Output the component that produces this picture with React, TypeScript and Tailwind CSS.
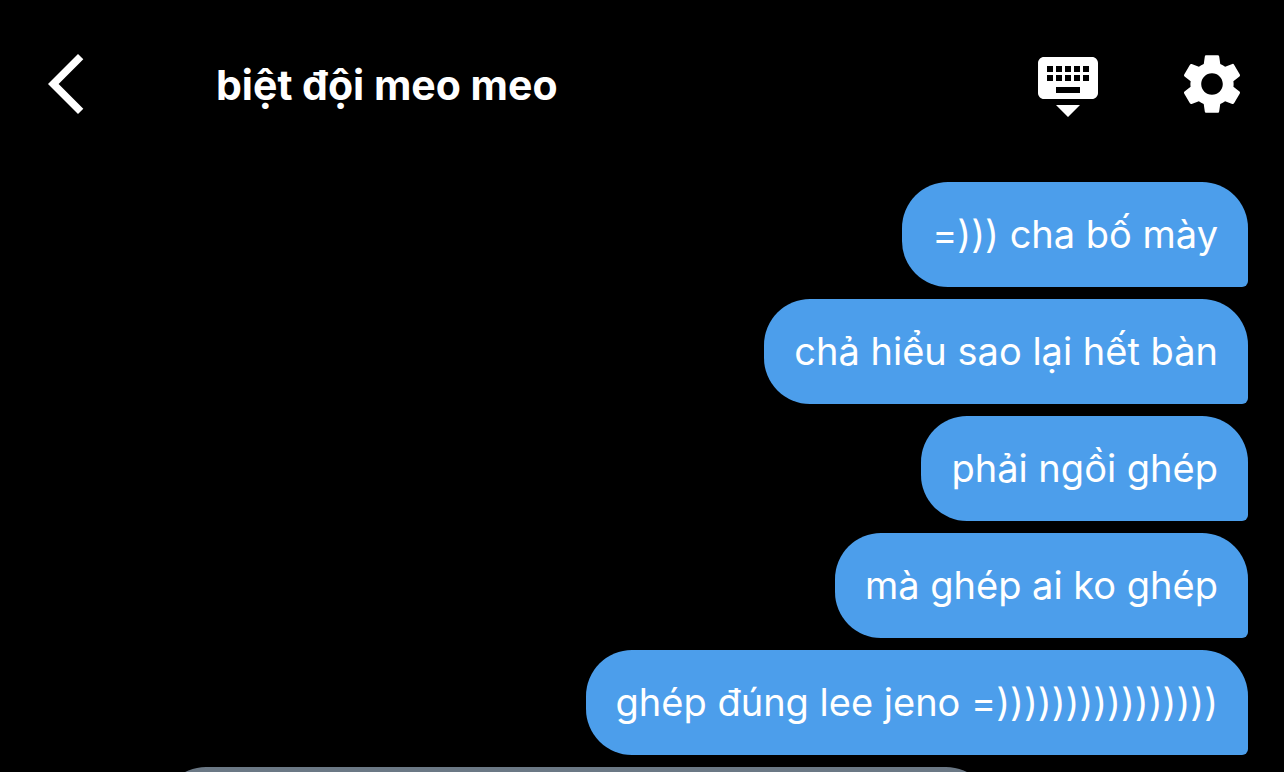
import { MdArrowBackIosNew, MdKeyboardHide, MdSettings } from "react-icons/md";

const sentMessages = [
  "=))) cha bố mày",
  "chả hiểu sao lại hết bàn",
  "phải ngồi ghép",
  "mà ghép ai ko ghép",
  "ghép đúng lee jeno =))))))))))))))))",
];

function SentBubble({ text }: { text: string }) {
  return (
    <li className="flex h-[105px] shrink-0 items-center self-end rounded-[46px] rounded-br-md bg-[#4c9eeb] px-[30px] pb-0.5 text-[38px] leading-[48px] whitespace-nowrap">
      {text}
    </li>
  );
}

export default function App() {
  return (
    <div className="flex h-screen flex-col overflow-hidden bg-black font-[Inter,'Noto_Sans',sans-serif] text-white">
      <header className="flex shrink-0 items-center py-12 pr-9 pl-[30px]">
        <button type="button" aria-label="Back" className="shrink-0">
          <MdArrowBackIosNew className="size-18" />
        </button>
        <h1 className="ml-[114px] flex-1 truncate pt-0.5 text-[41px] leading-[70px] font-bold">
          biệt đội meo meo
        </h1>
        <div className="flex shrink-0 gap-18">
          <button type="button" aria-label="Hide keyboard">
            <MdKeyboardHide className="size-18" />
          </button>
          <button type="button" aria-label="Settings">
            <MdSettings className="size-18" />
          </button>
        </div>
      </header>
      <main className="min-h-0 flex-1 overflow-hidden">
        <ul className="flex flex-col gap-3 pt-3.5 pr-9 pl-40">
          {sentMessages.map((text) => (
            <SentBubble key={text} text={text} />
          ))}
          <li className="h-[105px] w-[832px] max-w-full shrink-0 rounded-[46px] bg-[#6b7885]" />
        </ul>
      </main>
    </div>
  );
}
